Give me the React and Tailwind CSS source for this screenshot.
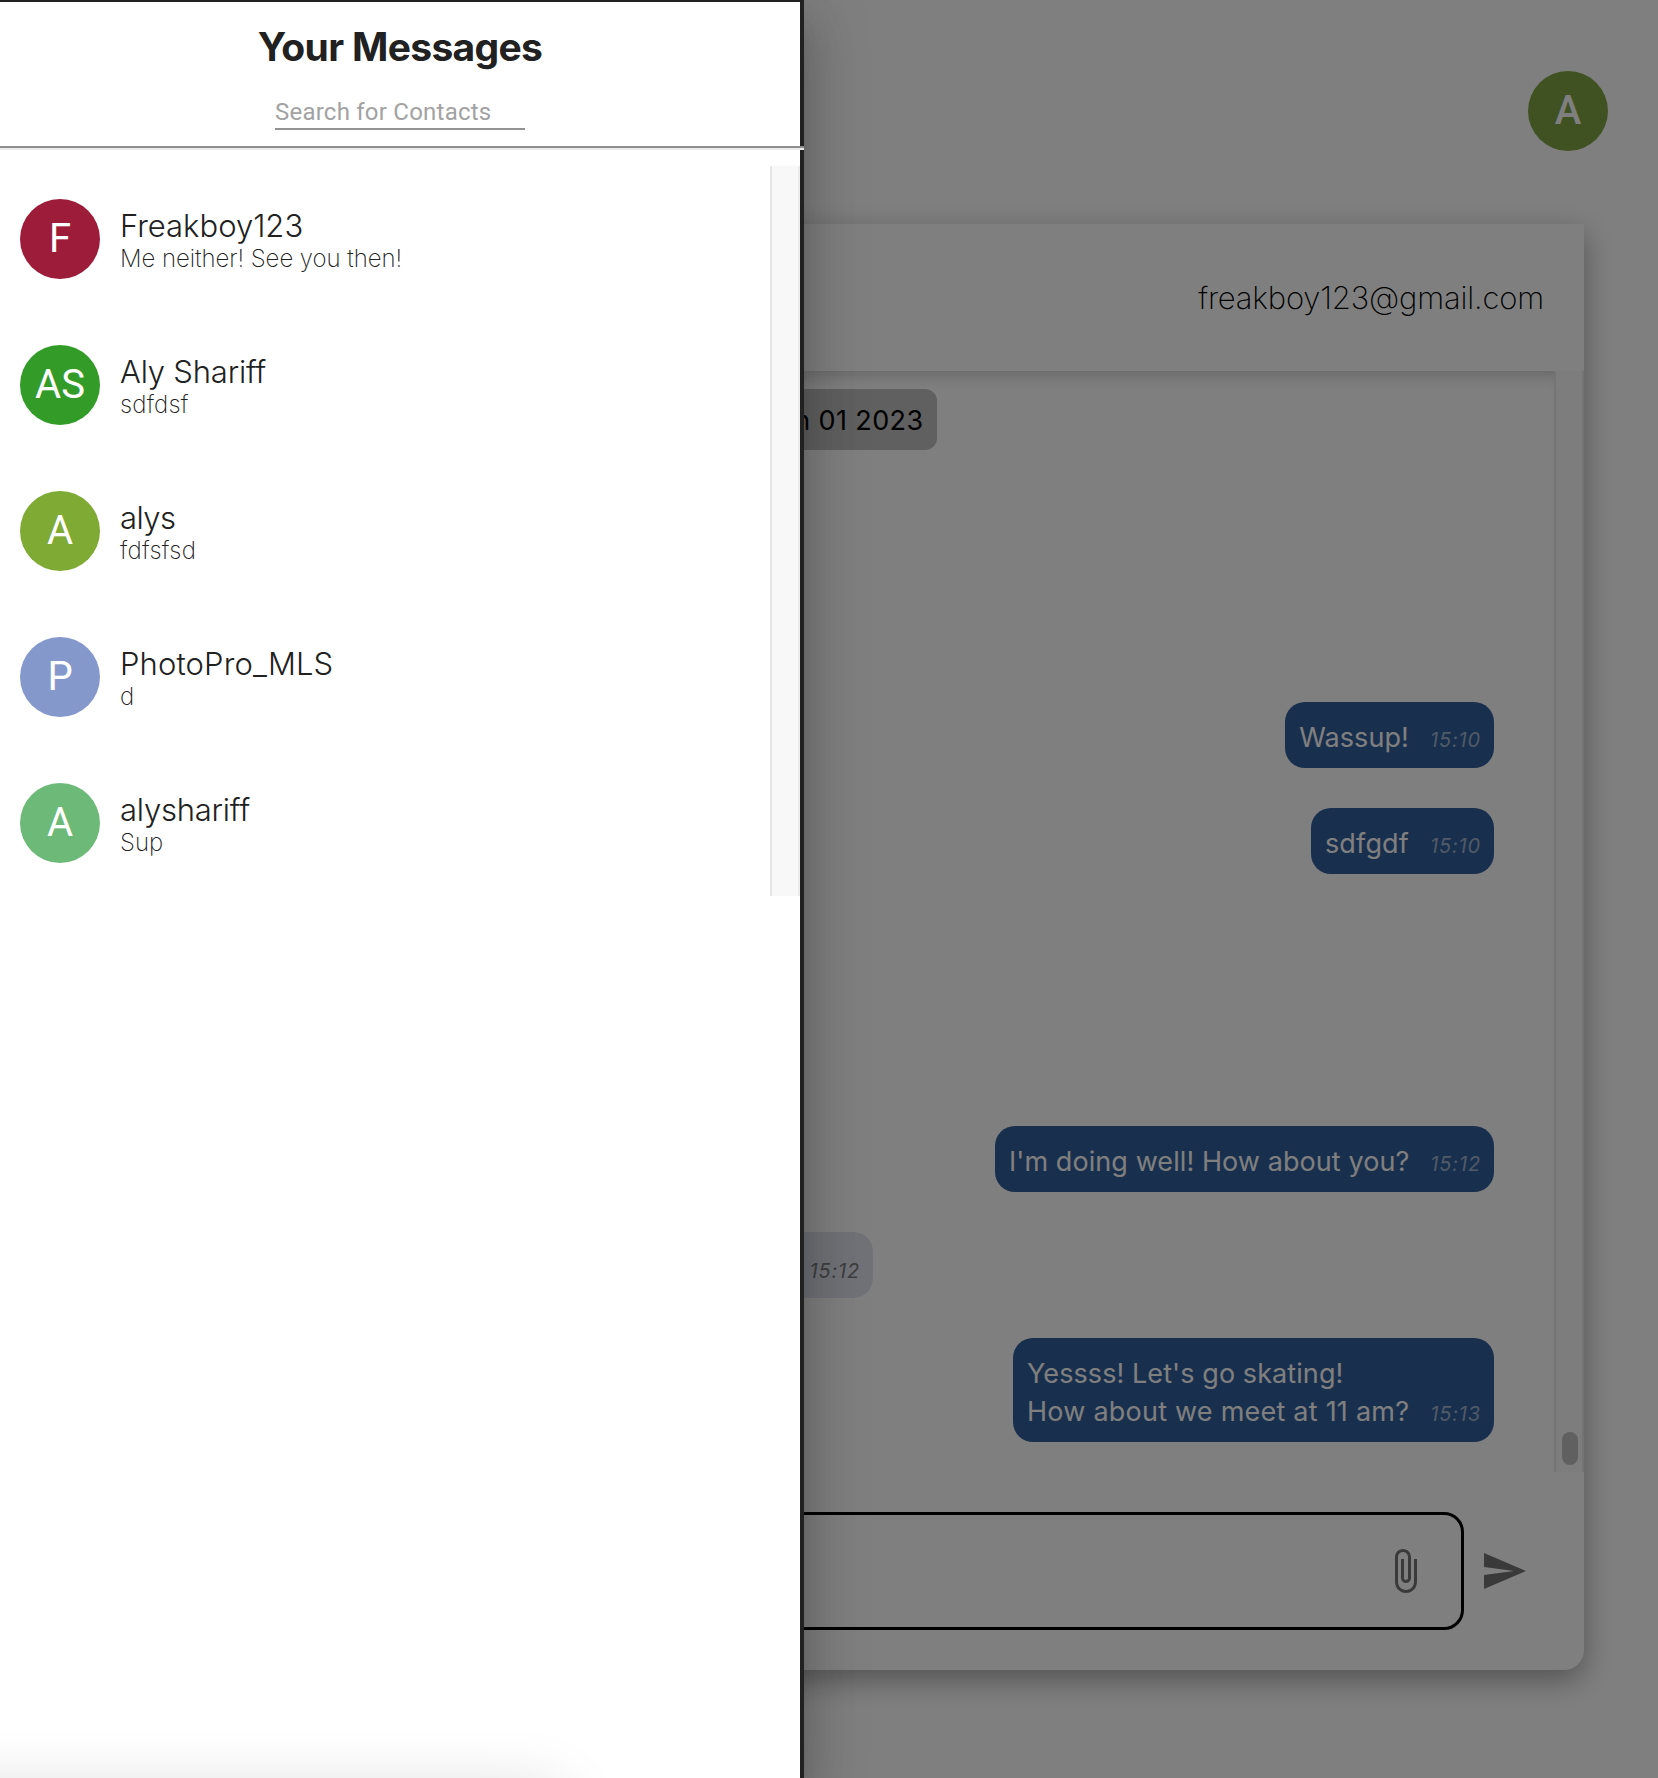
import React from "react";

const contacts = [
  { initials: "F", name: "Freakboy123", last: "Me neither! See you then!", color: "bg-[#9c1c3a]", nameFit: "tracking-[0px]", lastFit: "tracking-[-0.05px]" },
  { initials: "AS", name: "Aly Shariff", last: "sdfdsf", color: "bg-[#339c28]", nameFit: "tracking-[-0.2px]", lastFit: "tracking-[0.2px]" },
  { initials: "A", name: "alys", last: "fdfsfsd", color: "bg-[#7faa33]", nameFit: "tracking-[-0.5px]", lastFit: "tracking-[0.3px]" },
  { initials: "P", name: "PhotoPro_MLS", last: "d", color: "bg-[#8598cb]", nameFit: "tracking-[0.12px]", lastFit: "tracking-[0px]" },
  { initials: "A", name: "alyshariff", last: "Sup", color: "bg-[#6dba78]", nameFit: "tracking-[-0.22px]", lastFit: "tracking-[0px]" },
];

function Sent({ lines, time, className = "" }) {
  return (
    <div
      className={
        "mr-[60px] flex items-end self-end rounded-[20px] bg-[#305e9a] pt-[17px] pr-[13px] pb-[11px] pl-3.5 text-[27px] leading-[38px] whitespace-pre text-white " +
        className
      }
    >
      <div>
        {lines.map(([text, fit]) => (
          <div key={text} className={fit}>
            {text}
          </div>
        ))}
      </div>
      <span className="ml-[21px] pt-1 text-[20px] leading-[34px] tracking-[0.85px] text-[#a1b5d0] italic">{time}</span>
    </div>
  );
}

function Icon({ d, className = "" }) {
  return (
    <svg viewBox="0 0 24 24" className={"size-12 shrink-0 fill-[#757575] " + className}>
      <path d={d} />
    </svg>
  );
}

function Chat() {
  return (
    <main className="flex h-full flex-col">
      <header className="flex h-[224px] shrink-0 justify-end pt-[71px] pr-[50px]">
        <div className="flex size-20 items-center justify-center rounded-full bg-[#80a442] font-['Roboto'] text-[40px] font-medium text-white">
          A
        </div>
      </header>
      <section className="ml-[74px] flex h-[1446px] w-[1510px] flex-col rounded-b-[20px] bg-white shadow-[0_10px_30px_rgba(0,0,0,0.35)]">
        <div className="z-10 flex h-[147px] shrink-0 items-center justify-end pr-10 text-[31px] font-extralight tracking-[-0.18px] text-black">
          <span className="pt-px">freakboy123@gmail.com</span>
        </div>
        <div className="flex h-[1101px] shrink-0">
          <div className="flex flex-1 flex-col shadow-[inset_0_16px_16px_-12px_rgba(0,0,0,0.2)]">
            <div className="mt-[18px] flex h-[61px] items-center self-center rounded-xl bg-[#c0c0c0] px-3.5 pt-1 text-[27px] tracking-[0.38px] text-black">
              Sun Jan 01 2023
            </div>
            <Sent className="mt-[252px]" lines={[["Wassup!", "tracking-[0.08px]"]]} time="15:10" />
            <Sent className="mt-10" lines={[["sdfgdf", "tracking-[0.15px]"]]} time="15:10" />
            <Sent className="mt-[252px]" lines={[["I'm doing well! How about you?", "tracking-[0.08px]"]]} time="15:12" />
            <div className="mt-10 ml-10 flex h-[66px] w-[759px] items-center justify-end rounded-[20px] bg-[#e0e4ee] pt-[11px] pr-[13px] text-[20px] tracking-[0.8px] text-[#7c7c7c] italic">
              15:12
            </div>
            <Sent
              className="mt-10"
              lines={[
                ["Yessss! Let's go skating!", "tracking-[0.08px]"],
                ["How about we meet at 11 am?", "tracking-[0.23px]"],
              ]}
              time="15:13"
            />
          </div>
          <div className="flex w-[30px] items-end justify-center border-x-2 border-[#e8e8e8] bg-[#fafafa] pb-[7px] pl-0.5">
            <div className="h-[33px] w-4 rounded-full bg-[#c1c1c1]" />
          </div>
        </div>
        <div className="flex items-center pt-10">
          <div className="ml-10 flex h-[118px] w-[1350px] items-center justify-end rounded-[20px] border-3 border-black pr-8">
            <Icon d="M16.5 6v11.5c0 2.21-1.79 4-4 4s-4-1.79-4-4V5c0-1.38 1.12-2.5 2.5-2.5s2.5 1.12 2.5 2.5v10.5c0 .55-.45 1-1 1s-1-.45-1-1V6H10v9.5c0 1.38 1.12 2.5 2.5 2.5s2.5-1.12 2.5-2.5V5c0-2.21-1.79-4-4-4S7 2.79 7 5v12.5c0 3.04 2.46 5.5 5.5 5.5s5.5-2.46 5.5-5.5V6h-1.5z" />
          </div>
          <Icon className="ml-4" d="M2.01 21 23 12 2.01 3 2 10l15 2-15 2z" />
        </div>
      </section>
    </main>
  );
}

function Drawer() {
  return (
    <aside className="absolute inset-y-0 left-0 w-[804px] bg-white text-[#212121] shadow-[0_16px_20px_-10px_rgba(0,0,0,0.2),0_32px_48px_4px_rgba(0,0,0,0.14),0_12px_60px_10px_rgba(0,0,0,0.12)]">
      <div className="flex h-[146px] flex-col items-center border-t-2 border-r-4 border-[#212121]">
        <h1 className="mt-[21px] text-[39px] leading-12 font-bold tracking-[-0.66px]">Your Messages</h1>
        <div className="mt-[22px] h-[37px] w-[250px] border-b-2 border-[#949494] pt-[5px] font-['Roboto'] text-[24px] leading-7 tracking-[0.23px] text-[#a2a2a2]">
          Search for Contacts
        </div>
      </div>
      <div className="h-1 border-t-2 border-b-2 border-t-[#8e8e8e] border-b-[#ebebeb]" />
      <div className="h-[1628px] border-r-4 border-[#212121] pt-4">
        <div className="flex h-[730px]">
          <ul className="flex-1">
            {contacts.map((c) => (
              <li key={c.name} className="flex h-[146px] items-center gap-5 pl-5">
                <div
                  className={
                    "flex size-20 items-center justify-center rounded-full text-[40px] text-white font-['Roboto'] " + c.color
                  }
                >
                  {c.initials}
                </div>
                <div className="pt-0.5">
                  <div className={"text-[31px] leading-[38px] font-light " + c.nameFit}>{c.name}</div>
                  <div className={"text-[24px] leading-7 font-extralight " + c.lastFit}>{c.last}</div>
                </div>
              </li>
            ))}
          </ul>
          <div className="w-[30px] border-x-2 border-l-[#e4e4e4] border-r-[#ebebeb] bg-[#f8f8f8]" />
        </div>
      </div>
    </aside>
  );
}

export default function App() {
  return (
    <div className="relative h-[1778px] w-[1658px] overflow-hidden bg-white font-['Inter',sans-serif]">
      <Chat />
      <div className="absolute inset-0 z-10 bg-black/50" />
      <div className="absolute inset-0 z-20 overflow-hidden">
        <Drawer />
        <div className="absolute top-[1790px] -left-20 h-20 w-[640px] rounded-xl shadow-[0_0_64px_rgba(0,0,0,0.15)]" />
      </div>
    </div>
  );
}
